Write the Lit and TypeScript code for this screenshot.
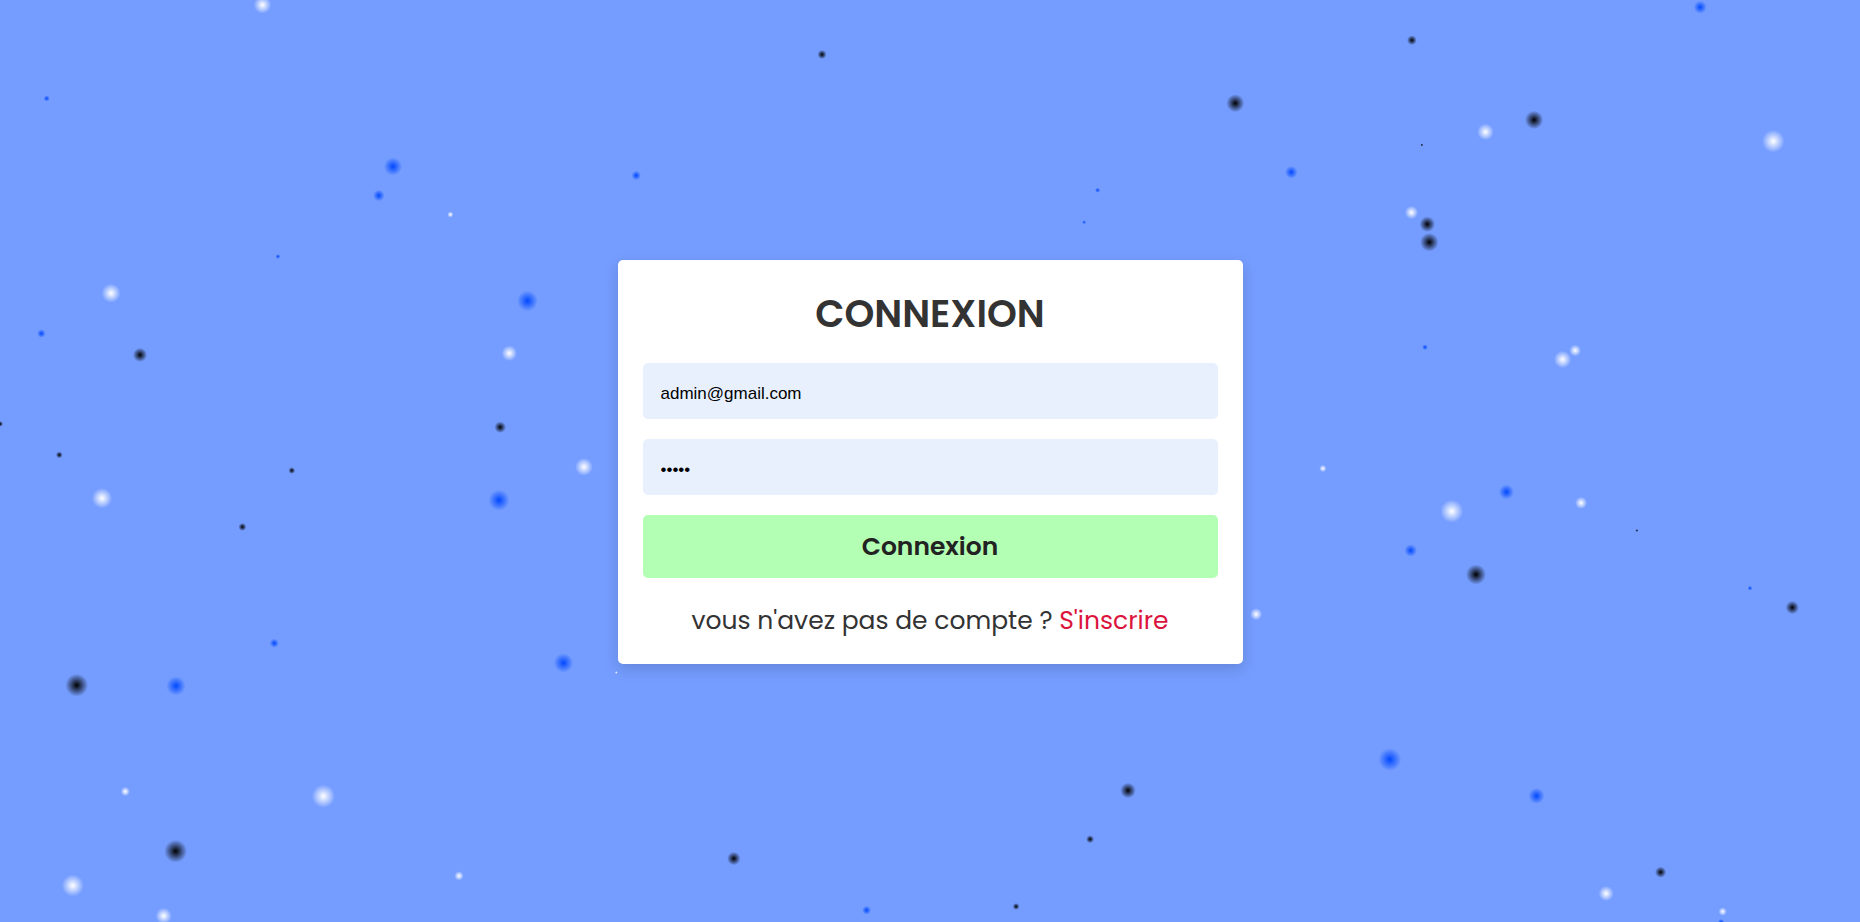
import { LitElement, css, html, svg } from "lit";
import { customElement, state } from "lit/decorators.js";

type Tone = "white" | "black" | "blue";
type Particle = [tone: Tone, x: number, y: number, radius: number];

const PARTICLES: Particle[] = [
  ["white", 262.5, 4.9, 8.8], ["blue", 46.7, 98.5, 3.1], ["blue", 393, 166.5, 9.1],
  ["blue", 378.8, 195.5, 5.8], ["white", 450.4, 214.5, 3.1], ["blue", 277.9, 256.5, 2.4],
  ["white", 111.1, 293.2, 9.5], ["blue", 527.5, 300.9, 10.4], ["blue", 41.4, 333.5, 4.2],
  ["black", 140, 354.9, 7.1], ["white", 509.3, 353.2, 7.8], ["black", 0.2, 423.9, 2.9],
  ["black", 59.3, 454.9, 3.4], ["black", 500.2, 427.2, 5.8], ["black", 291.8, 470.5, 3.4],
  ["white", 584, 466.9, 8.9], ["white", 102, 498.2, 10.2], ["blue", 499, 500.2, 10.5],
  ["black", 242.4, 526.9, 4], ["blue", 274.3, 643.2, 4.6], ["blue", 563.5, 662.9, 9.7],
  ["black", 76.7, 685.2, 11.4], ["blue", 176, 685.9, 9.6], ["white", 125.3, 791.5, 4.7],
  ["white", 323.4, 796.2, 11.6], ["black", 175.6, 851.2, 11.4], ["white", 72.8, 885.5, 11],
  ["white", 163.7, 915.9, 8.1], ["white", 459, 875.9, 4.7], ["white", 616.3, 672.5, 1.5],
  ["blue", 1700.2, 7.2, 6.5], ["black", 1411.9, 40.2, 4.9], ["white", 1485.5, 131.9, 8.3],
  ["black", 1534.1, 119.9, 9.2], ["black", 1421.8, 144.9, 1.5], ["white", 1773.3, 141.2, 11.3],
  ["blue", 1291.3, 172.2, 6.3], ["white", 1411.5, 212.5, 6.7], ["black", 1427.3, 224.2, 7.8],
  ["black", 1429.3, 242.2, 9.3], ["blue", 1425, 347.2, 2.9], ["white", 1575.2, 350.5, 5.9],
  ["white", 1562.6, 359.5, 8.7], ["white", 1322.9, 468.5, 3.7], ["blue", 1506.4, 491.9, 7.5],
  ["white", 1451.8, 511.2, 11.5], ["white", 1581.1, 502.9, 6.1], ["black", 1636.9, 530.5, 1.5],
  ["blue", 1410.7, 550.5, 6.3], ["black", 1476, 574.5, 10.1], ["blue", 1750, 588.2, 2.4],
  ["black", 1792.3, 607.5, 6.7], ["white", 1256.1, 614.2, 6.1], ["blue", 1389.8, 759.5, 11.4],
  ["blue", 1536.5, 795.9, 8], ["black", 1660.6, 872.2, 5.6], ["white", 1606.1, 893.5, 7.6],
  ["white", 1722.7, 911.5, 4.2], ["blue", 1721.1, 922.2, 3.3], ["black", 822, 54.5, 4.6],
  ["black", 1235.3, 103.2, 9], ["blue", 636.2, 175.5, 4.7], ["blue", 1097.6, 190.2, 2.6],
  ["blue", 1084.1, 222.2, 2], ["black", 1128, 790.5, 7.8], ["black", 1090.1, 839.2, 4],
  ["black", 733.8, 858.5, 6.7], ["blue", 866.6, 910.2, 4.4], ["black", 1016.1, 906.5, 3.4],
];

const TONES: Record<Tone, string> = { white: "#ffffff", black: "#000000", blue: "#0048ff" };

@customElement("particle-field")
class ParticleField extends LitElement {
  static styles = css`
    :host { display: block; }
    .field { display: block; width: 100%; height: 100%; }
  `;

  render() {
    return html`
      <svg class="field" viewBox="0 0 1860 922" preserveAspectRatio="xMidYMid slice" aria-hidden="true">
        <defs>
          ${(Object.keys(TONES) as Tone[]).map((tone) => svg`
            <radialGradient id=${tone}>
              <stop offset="0" stop-color=${TONES[tone]} />
              <stop offset="1" stop-color=${TONES[tone]} stop-opacity="0" />
            </radialGradient>`)}
        </defs>
        ${PARTICLES.map(([tone, x, y, r]) => svg`<circle cx=${x} cy=${y} r=${r} fill="url(#${tone})" />`)}
      </svg>
    `;
  }
}

@customElement("login-card")
class LoginCard extends LitElement {
  @state() private email = "admin@gmail.com";
  @state() private password = "admin";

  static styles = css`
    :host { display: block; }
    .card {
      display: flex;
      flex-direction: column;
      gap: 20px;
      padding: 25px;
      border-radius: 5px;
      background: #fff;
      box-shadow: 0 5px 15px rgba(0, 0, 0, 0.15);
      color: #333;
      font-family: Poppins, Inter, sans-serif;
      text-align: center;
    }
    .title {
      margin: 0;
      font-size: 38px;
      line-height: 58px;
      font-weight: 600;
      text-transform: uppercase;
    }
    .field {
      box-sizing: border-box;
      width: 100%;
      height: 56px;
      padding: 5px 18px 0;
      border: 0;
      border-radius: 5px;
      background: #e8f0fe;
      color: #000;
      font: 17px "Liberation Sans", Arial, sans-serif;
    }
    .submit {
      height: 63px;
      padding: 0;
      border: 0;
      border-radius: 5px;
      background: #b3ffb3;
      color: #222;
      font: 600 25px Poppins, Inter, sans-serif;
      cursor: pointer;
    }
    .signup {
      margin: 0;
      padding: 4px 0 0;
      font-size: 25px;
      line-height: 37px;
    }
    .link { color: crimson; text-decoration: none; }
  `;

  render() {
    return html`
      <form class="card" @submit=${(e: Event) => e.preventDefault()}>
        <h1 class="title">Connexion</h1>
        <input class="field" type="email" name="email" aria-label="Email" .value=${this.email}
          @input=${(e: Event) => (this.email = (e.target as HTMLInputElement).value)} />
        <input class="field" type="password" name="password" aria-label="Mot de passe" .value=${this.password}
          @input=${(e: Event) => (this.password = (e.target as HTMLInputElement).value)} />
        <button class="submit" type="submit">Connexion</button>
        <p class="signup">vous n'avez pas de compte ? <a class="link" href="#inscription">S'inscrire</a></p>
      </form>
    `;
  }
}

@customElement("app-root")
class AppRoot extends LitElement {
  static styles = css`
    :host {
      display: grid;
      grid-template: minmax(100vh, auto) / 1fr;
      background: #759dff;
      overflow: hidden;
    }
    .backdrop, .content { grid-area: 1 / 1; }
    .backdrop { height: 100%; min-height: 0; contain: size; }
    .content {
      z-index: 1;
      box-sizing: border-box;
      width: 100%;
      max-width: 665px;
      padding: 22px 20px 20px;
      place-self: center;
    }
  `;

  render() {
    return html`
      <particle-field class="backdrop"></particle-field>
      <main class="content"><login-card></login-card></main>
    `;
  }
}
